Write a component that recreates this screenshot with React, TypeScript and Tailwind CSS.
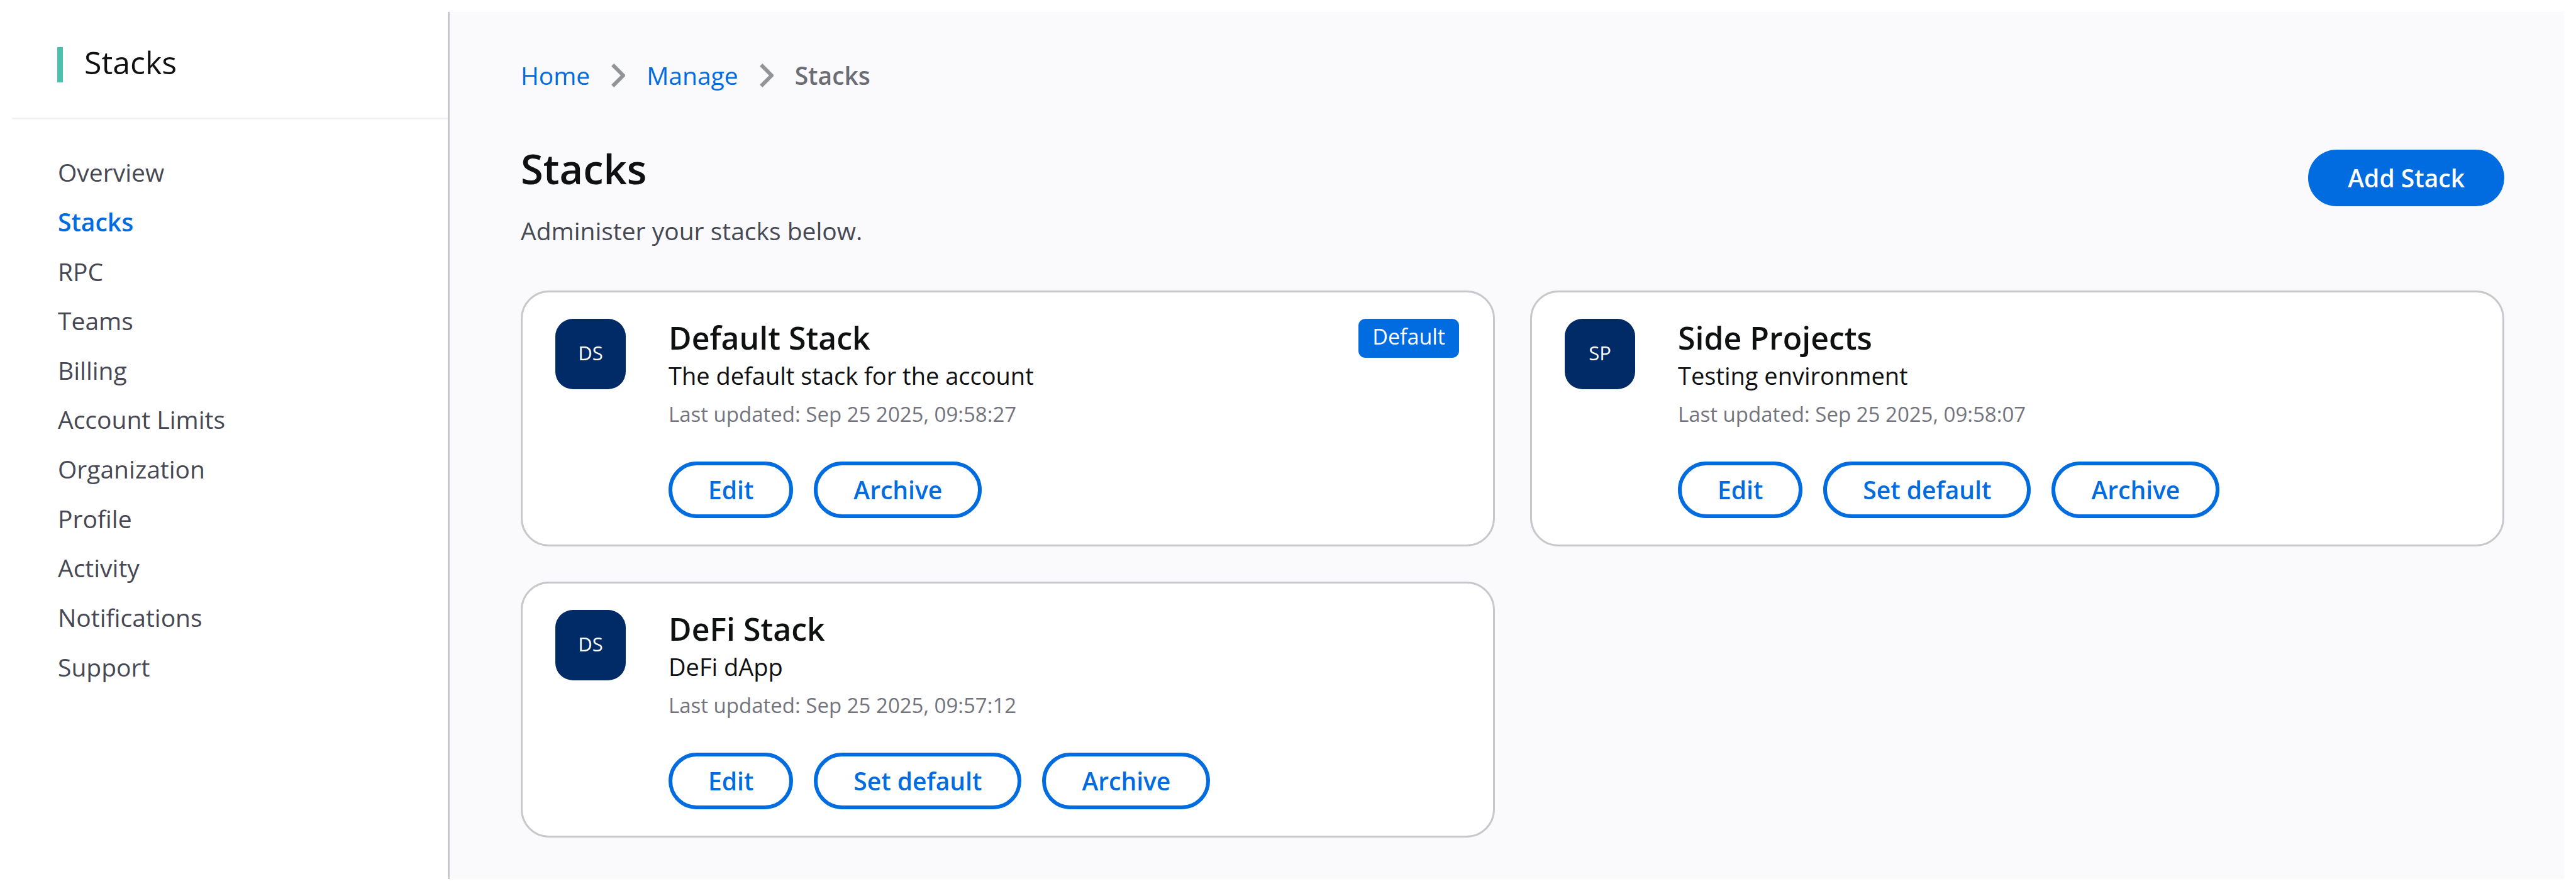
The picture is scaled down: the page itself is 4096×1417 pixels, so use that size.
type Stack = {
  initials: string;
  name: string;
  description: string;
  updated: string;
  isDefault?: boolean;
};

const STACKS: Stack[] = [
  {
    initials: "DS",
    name: "Default Stack",
    description: "The default stack for the account",
    updated: "Sep 25 2025, 09:58:27",
    isDefault: true,
  },
  {
    initials: "SP",
    name: "Side Projects",
    description: "Testing environment",
    updated: "Sep 25 2025, 09:58:07",
  },
  {
    initials: "DS",
    name: "DeFi Stack",
    description: "DeFi dApp",
    updated: "Sep 25 2025, 09:57:12",
  },
];

const NAV = [
  "Overview",
  "Stacks",
  "RPC",
  "Teams",
  "Billing",
  "Account Limits",
  "Organization",
  "Profile",
  "Activity",
  "Notifications",
  "Support",
];

export default function App() {
  return (
    <div className="flex min-h-screen bg-white p-[19px] font-['Open_Sans',sans-serif] text-[39px] leading-[60px] text-[#0f1012]">
      <Sidebar />

      <main className="flex-1 bg-[#fafafc] pt-[71px] pr-[95px] pb-[65px] pl-[113px]">
        <nav aria-label="Breadcrumb" className="flex items-center gap-[34px]">
          <a href="#" className="text-[#006ce0]">
            Home
          </a>
          <Chevron />
          <a href="#" className="text-[#006ce0]">
            Manage
          </a>
          <Chevron />
          <span className="font-semibold text-[#6b6c74]">Stacks</span>
        </nav>

        <header className="mt-[73px] flex items-start justify-between">
          <div>
            <h1 className="text-[65px] leading-[90px] font-semibold">Stacks</h1>
            <p className="mt-6 text-[#464853]">Administer your stacks below.</p>
          </div>
          <button
            type="button"
            className="mt-[15px] h-[90px] rounded-full bg-[#006ce0] px-[63px] font-semibold text-white"
          >
            Add Stack
          </button>
        </header>

        <section className="mt-[65px] grid grid-cols-2 gap-14">
          {STACKS.map((s) => (
            <StackCard key={s.name} stack={s} />
          ))}
        </section>
      </main>
    </div>
  );
}

function Sidebar() {
  return (
    <aside className="w-[696px] shrink-0 border-r-3 border-[#c8c8cc]">
      <div className="flex h-[171px] items-start border-b-3 border-[#f3f3f7] pt-14 pl-[72px]">
        <span className="h-14 w-[9px] bg-[#4bc0ad]" />
        <h2 className="pl-[34px] text-[50px] leading-[48px]">Stacks</h2>
      </div>
      <nav aria-label="Account">
        <ul className="mt-[45px] grid h-[865px] auto-rows-fr items-center pl-[73px]">
          {NAV.map((item) => (
            <li key={item}>
              <a
                href="#"
                className={
                  item === "Stacks"
                    ? "font-semibold text-[#006ce0]"
                    : "text-[#464853]"
                }
              >
                {item}
              </a>
            </li>
          ))}
        </ul>
      </nav>
    </aside>
  );
}

function Chevron() {
  return (
    <svg
      viewBox="0 0 22 38"
      className="h-[38px] w-[22px] shrink-0"
      fill="none"
      stroke="#929397"
      strokeWidth="6"
      strokeLinejoin="round"
      aria-hidden="true"
    >
      <path d="M2.2 2.2 L19 19 L2.2 35.8" />
    </svg>
  );
}

function StackCard({ stack }: { stack: Stack }) {
  return (
    <article className="flex items-start rounded-[45px] border-3 border-[#c8c8cc] bg-white py-[42px] pr-[54px] pl-[52px]">
      <div className="flex size-28 shrink-0 items-center justify-center rounded-[28px] bg-[#002b66] pb-1 text-[31px] text-white">
        {stack.initials}
      </div>

      <div className="ml-[68px] flex-1">
        <h3 className="text-[50px] leading-[60px] font-semibold">
          {stack.name}
        </h3>
        <p className="text-[38px]">{stack.description}</p>
        <p className="text-[33px] leading-[64px] text-[#73747e]">
          Last updated: {stack.updated}
        </p>
        <div className="mt-[43px] flex gap-[33px]">
          <OutlineButton label="Edit" />
          {!stack.isDefault && <OutlineButton label="Set default" />}
          <OutlineButton label="Archive" />
        </div>
      </div>

      {stack.isDefault && (
        <span className="h-[62px] rounded-[11px] bg-[#006ce0] px-[22px] text-[34px] leading-[56px] text-white">
          Default
        </span>
      )}
    </article>
  );
}

function OutlineButton({ label }: { label: string }) {
  return (
    <button
      type="button"
      className="flex h-[90px] items-center rounded-full border-6 border-[#006ce0] px-[57px] font-semibold text-[#006ce0]"
    >
      {label}
    </button>
  );
}
